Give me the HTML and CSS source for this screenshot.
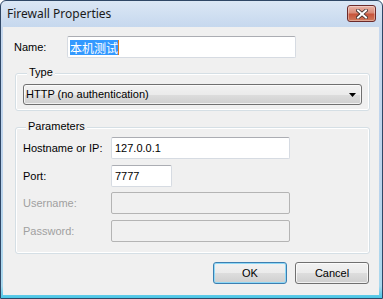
FILE: index.html
```html
<!DOCTYPE html>
<html>
<head>
<meta charset="utf-8">
<link rel="stylesheet" href="styles.css">
</head>
<body>
<div class="window">
  <div class="titlebar">
    <span class="title">Firewall Properties</span>
    <span class="close">
      <svg width="12" height="10" viewBox="0 0 12 10">
        <path d="M2 1.5 L10 8.5 M10 1.5 L2 8.5" stroke="#3a2a2a" stroke-width="3.6" stroke-linecap="square"/>
        <path d="M2 1.5 L10 8.5 M10 1.5 L2 8.5" stroke="#ffffff" stroke-width="2" stroke-linecap="square"/>
      </svg>
    </span>
  </div>
  <div class="client">
    <div class="row name-row">
      <span class="lbl name-lbl">Name:</span>
      <div class="input name-input"><span class="sel">本机测试</span><span class="caret"></span></div>
    </div>
    <div class="group type-group">
      <div class="legend">Type</div>
      <div class="combo">
        <span>HTTP (no authentication)</span>
        <svg class="arrow" width="7" height="4" viewBox="0 0 7 4"><path d="M0 0 H7 L3.5 4 Z" fill="#000"/></svg>
      </div>
    </div>
    <div class="group params-group">
      <div class="legend">Parameters</div>
      <div class="row prow first">
        <span class="lbl plbl">Hostname or IP:</span>
        <div class="input wide">127.0.0.1</div>
      </div>
      <div class="row prow">
        <span class="lbl plbl">Port:</span>
        <div class="input narrow">7777</div>
      </div>
      <div class="row prow user">
        <span class="lbl plbl disabled">Username:</span>
        <div class="input wide off"></div>
      </div>
      <div class="row prow">
        <span class="lbl plbl disabled">Password:</span>
        <div class="input wide off"></div>
      </div>
    </div>
    <div class="buttons">
      <div class="btn default">OK</div>
      <div class="btn">Cancel</div>
    </div>
  </div>
</div>
</body>
</html>
```

FILE: styles.css
```css
html, body {
  margin: 0;
  padding: 0;
  background: #ffffff;
}
.window {
  width: 383px;
  height: 299px;
  box-sizing: border-box;
  border: 1px solid #2f4766;
  border-radius: 6px 6px 0 0;
  background: linear-gradient(to bottom, #dbe7f5 0px, #c6d8ee 26px, #bcd3ec 60%, #a9d8ee 96%, #48c6e6 100%);
  display: flex;
  flex-direction: column;
  font-family: "Liberation Sans", Arial, sans-serif;
  font-size: 11px;
  color: #000;
}
.titlebar {
  height: 26px;
  flex: none;
  display: flex;
  justify-content: space-between;
  align-items: flex-start;
  padding: 4px 6px 0 6px;
  box-sizing: border-box;
}
.title {
  font-family: "Noto Sans", "Open Sans", sans-serif;
  font-size: 12px;
  line-height: 16px;
  margin-top: 1px;
  color: #1a1a1a;
}
.close {
  width: 29px;
  height: 17px;
  box-sizing: border-box;
  border: 1px solid #6b2a2a;
  border-radius: 3px;
  background: linear-gradient(to bottom, #e9b3a6 0%, #d98b78 45%, #c7543b 55%, #d07a5c 100%);
  box-shadow: inset 0 0 0 1px rgba(255,255,255,0.35);
  display: flex;
  align-items: center;
  justify-content: center;
}
.close svg { display: block; }
.client {
  flex: 1;
  margin: 0 3px 3px 2px;
  background: #f0f0f0;
  display: flex;
  flex-direction: column;
  padding-top: 9px;
  box-sizing: border-box;
}
.row {
  display: flex;
  align-items: center;
  height: 22px;
}
.lbl {
  line-height: 13px;
  white-space: nowrap;
}
.name-lbl {
  width: 53px;
  padding-left: 11px;
}
.input {
  height: 22px;
  box-sizing: border-box;
  border: 1px solid #d6dbe2;
  border-top-color: #abadb3;
  border-radius: 2px;
  background: #ffffff;
  display: flex;
  align-items: center;
  padding-left: 3px;
  line-height: 13px;
}
.name-input {
  width: 229px;
  padding-left: 2px;
}
.sel {
  background: #3399ff;
  color: #ffffff;
  font-family: "Noto Sans CJK SC", sans-serif;
  font-size: 12px;
  line-height: 15px;
  height: 15px;
  letter-spacing: 0;
}
.caret {
  width: 1px;
  height: 15px;
  background: #e07a1a;
}
.group {
  margin-left: 12px;
  width: 355px;
  box-sizing: border-box;
  border: 1px solid #d5dfe5;
  border-radius: 3px;
  box-shadow: inset 0 0 0 1px #ffffff;
}
.legend {
  width: fit-content;
  margin-top: -8px;
  margin-left: 4px;
  padding: 0 2px;
  background: #f0f0f0;
  line-height: 13px;
  height: 13px;
}
.type-group {
  margin-top: 15px;
  padding: 0 7px 5px 7px;
}
.combo {
  margin-top: 5px;
  height: 21px;
  box-sizing: border-box;
  border: 1px solid #707070;
  border-radius: 3px;
  background: linear-gradient(to bottom, #f2f2f2 0%, #ebebeb 50%, #dddddd 51%, #cfcfcf 100%);
  box-shadow: inset 0 0 0 1px rgba(255,255,255,0.7);
  display: flex;
  align-items: center;
  justify-content: space-between;
  padding: 0 5px 0 2px;
  line-height: 13px;
}
.arrow { display: block; }
.params-group {
  margin-top: 16px;
  padding: 0 7px 11px 6px;
}
.prow.first { margin-top: 4px; }
.prow + .prow { margin-top: 6px; }
.prow.user { margin-top: 5px; }
.plbl {
  width: 88px;
  padding-left: 1px;
}
.wide { width: 179px; }
.narrow { width: 61px; }
.input.off {
  background: #f0f0f0;
  border: 1px solid #b4b4b4;
}
.disabled { color: #a0a0a0; }
.buttons {
  margin-top: 8px;
  display: flex;
  justify-content: flex-end;
  gap: 8px;
  padding-right: 10px;
}
.btn {
  width: 74px;
  height: 22px;
  box-sizing: border-box;
  border: 1px solid #707070;
  border-radius: 3px;
  background: linear-gradient(to bottom, #f2f2f2 0%, #ebebeb 50%, #dddddd 51%, #cfcfcf 100%);
  box-shadow: inset 0 0 0 1px rgba(255,255,255,0.7);
  display: flex;
  align-items: center;
  justify-content: center;
  line-height: 13px;
}
.btn.default {
  border-color: #3c7fb1;
  box-shadow: inset 0 0 0 1px #8fd8f6;
}
```
